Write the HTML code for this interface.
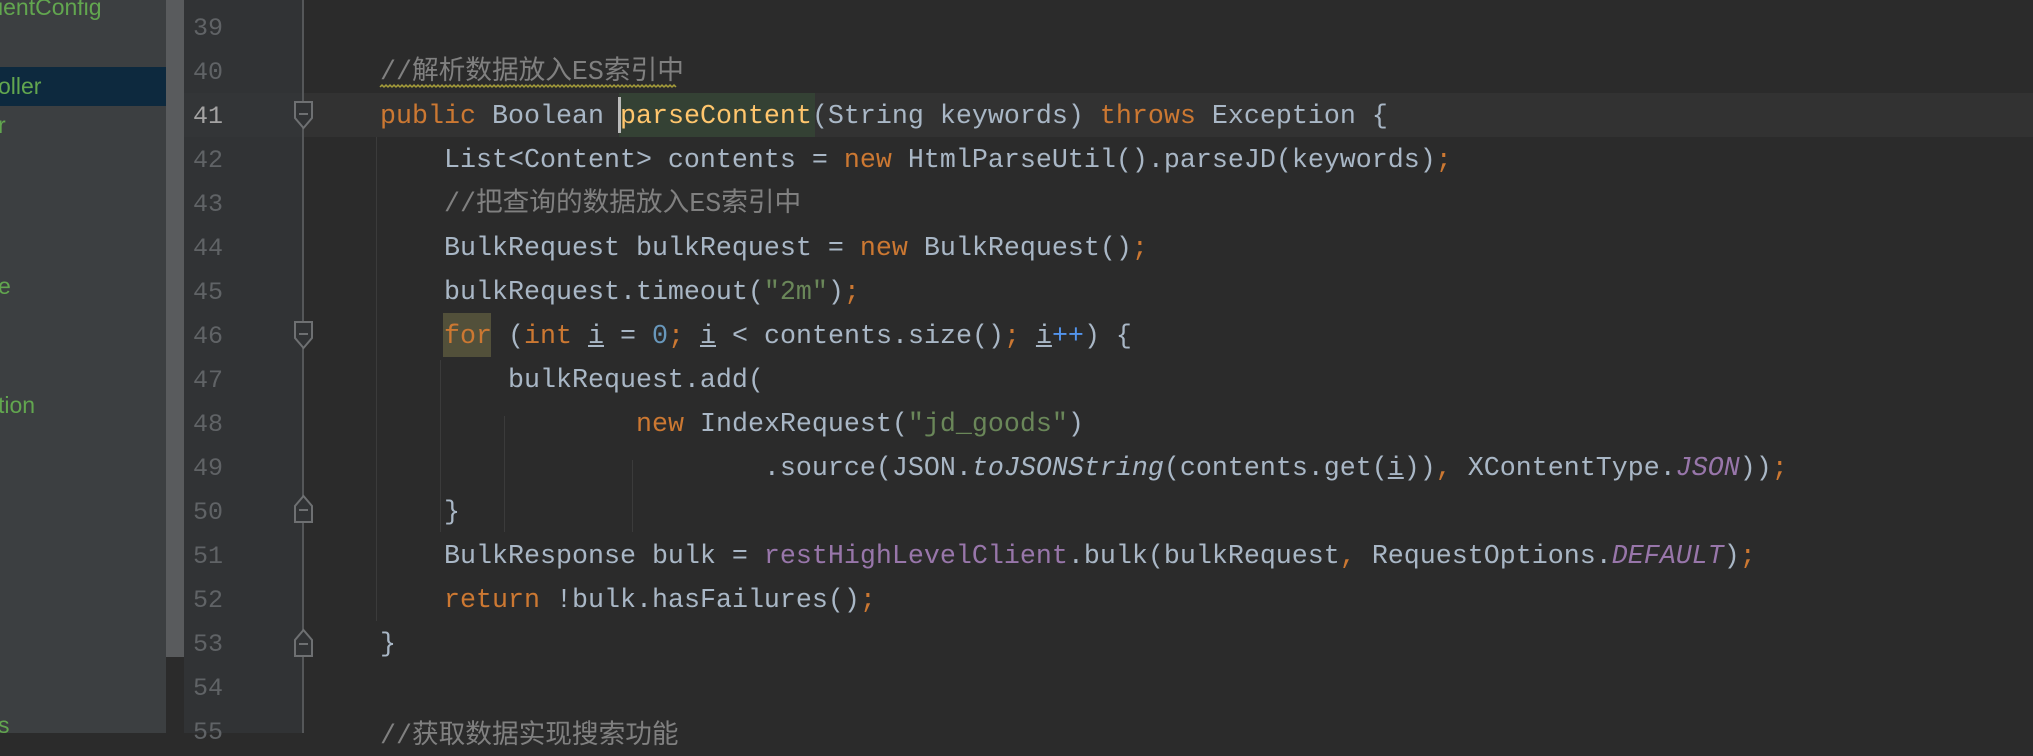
<!DOCTYPE html>
<html><head><meta charset="utf-8"><style>
html,body{margin:0;padding:0;width:2033px;height:733px;overflow:hidden;background:#2b2b2b;}
.side{position:absolute;left:0;top:0;width:166px;height:733px;background:#3c3f41;}
.sb{position:absolute;left:166px;top:0;width:18px;height:657px;background:#595b5d;}
.sel{position:absolute;left:0;top:67px;width:184px;height:39px;background:#0d293e;}
.st{position:absolute;left:-2px;font:23px "Liberation Sans",sans-serif;color:#62a64f;}
.gut{position:absolute;left:184px;top:0;width:119px;height:733px;background:#313335;}
.cur{position:absolute;left:303px;top:93px;width:1730px;height:44px;background:#323232;}
.cur2{position:absolute;left:184px;top:93px;width:119px;height:44px;background:#333537;}
.ln{position:absolute;left:193px;width:36px;text-align:left;font:25px "Liberation Mono",monospace;color:#606366;line-height:44px;margin-top:3px;}
.foldline{position:absolute;left:302px;top:0;width:2px;height:733px;background:#555759;}
.l{position:absolute;left:380px;height:44px;line-height:44px;white-space:pre;font:26.67px "Liberation Mono","Noto Sans CJK SC",monospace;color:#a9b7c6;}
.k{color:#cc7832}.c{color:#808080}.s{color:#6a8759}.n{color:#6897bb}.p{color:#9876aa}.pi{color:#9876aa;font-style:italic}.i{font-style:italic}.m{color:#ffc66d}.u{text-decoration:underline}
.g{position:absolute;width:1px;background:#3b3b3b;}
</style></head><body>
<div class="side"></div>
<div class="sel"></div>
<div class="sb"></div>
<div class="st" style="top:-6px">ientConfig</div>
<div class="st" style="top:73px">oller</div>
<div class="st" style="top:112px">r</div>
<div class="st" style="top:273px">e</div>
<div class="st" style="top:392px">tion</div>
<div class="st" style="top:712px">s</div>
<div class="gut"></div>
<div class="cur2"></div>
<div class="cur"></div>
<div class="foldline"></div>
<div class="ln" style="top:4px">39</div>
<div class="ln" style="top:48px">40</div>
<div class="ln" style="top:92px;color:#a4a3a3">41</div>
<div class="ln" style="top:136px">42</div>
<div class="ln" style="top:180px">43</div>
<div class="ln" style="top:224px">44</div>
<div class="ln" style="top:268px">45</div>
<div class="ln" style="top:312px">46</div>
<div class="ln" style="top:356px">47</div>
<div class="ln" style="top:400px">48</div>
<div class="ln" style="top:444px">49</div>
<div class="ln" style="top:488px">50</div>
<div class="ln" style="top:532px">51</div>
<div class="ln" style="top:576px">52</div>
<div class="ln" style="top:620px">53</div>
<div class="ln" style="top:664px">54</div>
<div class="ln" style="top:708px">55</div>
<svg style="position:absolute;left:0;top:0" width="2033" height="733">
<g fill="#313335" stroke="#6e7072" stroke-width="2">
<path d="M295 102 h17 v16 l-8.5 10 l-8.5 -10 z"/><path d="M299 114 h9" />
<path d="M295 322 h17 v16 l-8.5 10 l-8.5 -10 z"/><path d="M299 334 h9"/>
<path d="M295 522 h17 v-16 l-8.5 -10 l-8.5 10 z"/><path d="M299 510 h9"/>
<path d="M295 656 h17 v-16 l-8.5 -10 l-8.5 10 z"/><path d="M299 644 h9"/>
</g>
<polyline fill="none" stroke="#a49c3a" stroke-width="1.5" points="380,87 382,85 384,87 386,85 388,87 390,85 392,87 394,85 396,87 398,85 400,87 402,85 404,87 406,85 408,87 410,85 412,87 414,85 416,87 418,85 420,87 422,85 424,87 426,85 428,87 430,85 432,87 434,85 436,87 438,85 440,87 442,85 444,87 446,85 448,87 450,85 452,87 454,85 456,87 458,85 460,87 462,85 464,87 466,85 468,87 470,85 472,87 474,85 476,87 478,85 480,87 482,85 484,87 486,85 488,87 490,85 492,87 494,85 496,87 498,85 500,87 502,85 504,87 506,85 508,87 510,85 512,87 514,85 516,87 518,85 520,87 522,85 524,87 526,85 528,87 530,85 532,87 534,85 536,87 538,85 540,87 542,85 544,87 546,85 548,87 550,85 552,87 554,85 556,87 558,85 560,87 562,85 564,87 566,85 568,87 570,85 572,87 574,85 576,87 578,85 580,87 582,85 584,87 586,85 588,87 590,85 592,87 594,85 596,87 598,85 600,87 602,85 604,87 606,85 608,87 610,85 612,87 614,85 616,87 618,85 620,87 622,85 624,87 626,85 628,87 630,85 632,87 634,85 636,87 638,85 640,87 642,85 644,87 646,85 648,87 650,85 652,87 654,85 656,87 658,85 660,87 662,85 664,87 666,85 668,87 670,85 672,87 674,85 676,87"/>
</svg>
<div class="g" style="left:376px;top:137px;height:484px"></div>
<div class="g" style="left:440px;top:360px;height:172px"></div>
<div class="g" style="left:504px;top:416px;height:116px"></div>
<div class="g" style="left:632px;top:460px;height:72px"></div>
<div style="position:absolute;left:619px;top:93px;width:196px;height:44px;background:#344134"></div>
<div style="position:absolute;left:443px;top:313px;width:48px;height:44px;background:#52503a"></div>
<div style="position:absolute;left:618px;top:97px;width:3px;height:36px;background:#bbbbbb"></div>
<div class="l" style="top:48px"><span class="c">//解析数据放入ES索引中</span></div>
<div class="l" style="top:102px"><span class="k">public </span>Boolean <span class="m">parseContent</span>(String keywords) <span class="k">throws </span>Exception {</div>
<div class="l" style="top:146px">    List&lt;Content&gt; contents = <span class="k">new </span>HtmlParseUtil().parseJD(keywords)<span class="k">;</span></div>
<div class="l" style="top:180px">    <span class="c">//把查询的数据放入ES索引中</span></div>
<div class="l" style="top:234px">    BulkRequest bulkRequest = <span class="k">new </span>BulkRequest()<span class="k">;</span></div>
<div class="l" style="top:278px">    bulkRequest.timeout(<span class="s">"2m"</span>)<span class="k">;</span></div>
<div class="l" style="top:322px">    <span class="k">for </span>(<span class="k">int </span><span class="u">i</span> = <span class="n">0</span><span class="k">; </span><span class="u">i</span> &lt; contents.size()<span class="k">; </span><span class="u">i</span><span style="color:#5394ec">++</span>) {</div>
<div class="l" style="top:366px">        bulkRequest.add(</div>
<div class="l" style="top:410px">                <span class="k">new </span>IndexRequest(<span class="s">"jd_goods"</span>)</div>
<div class="l" style="top:454px">                        .source(JSON.<span class="i">toJSONString</span>(contents.get(<span class="u">i</span>))<span class="k">, </span>XContentType.<span class="pi">JSON</span>))<span class="k">;</span></div>
<div class="l" style="top:498px">    }</div>
<div class="l" style="top:542px">    BulkResponse bulk = <span class="p">restHighLevelClient</span>.bulk(bulkRequest<span class="k">, </span>RequestOptions.<span class="pi">DEFAULT</span>)<span class="k">;</span></div>
<div class="l" style="top:586px">    <span class="k">return </span>!bulk.hasFailures()<span class="k">;</span></div>
<div class="l" style="top:630px">}</div>
<div class="l" style="top:712px"><span class="c">//获取数据实现搜索功能</span></div>
</body></html>
